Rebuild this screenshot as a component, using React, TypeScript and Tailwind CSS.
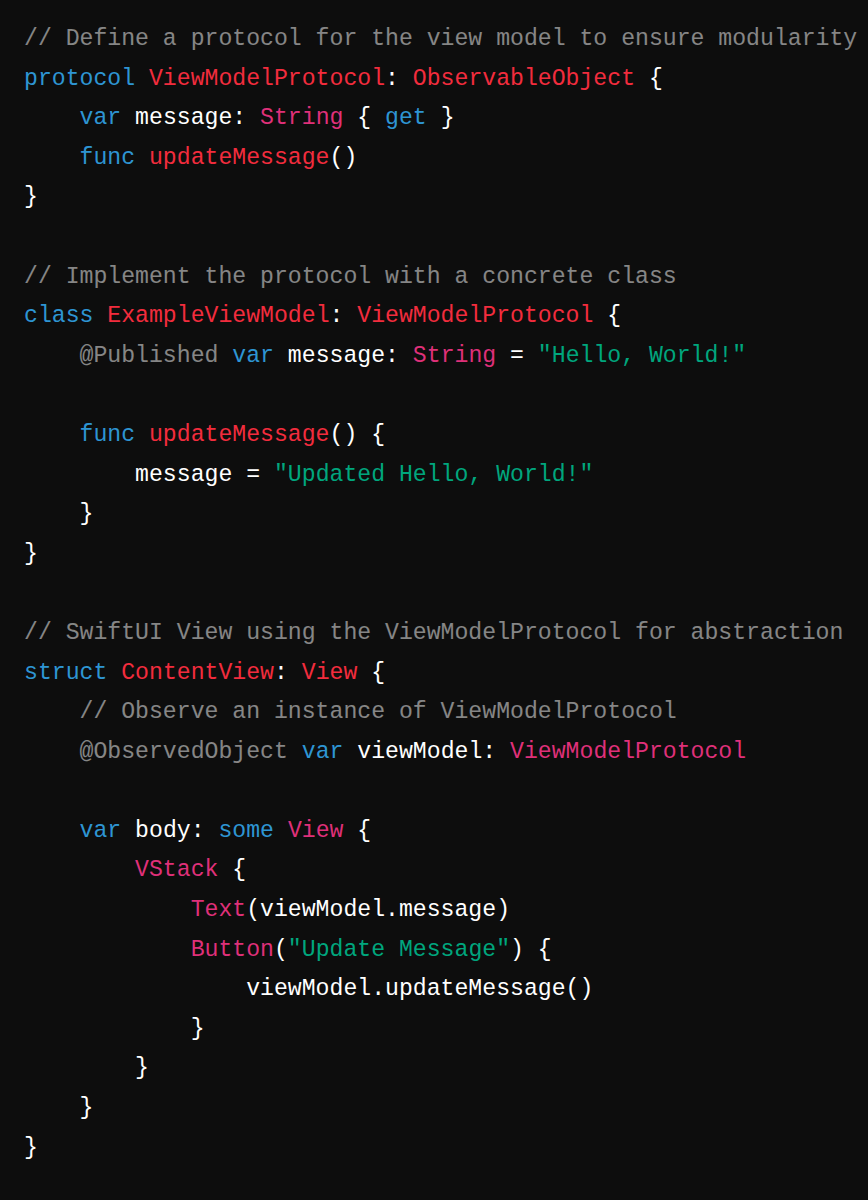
import React from "react";

type Tok = [string, string];

const K = "text-[#2e95d3]";
const T = "text-[#f22c3d]";
const P = "text-[#df3079]";
const S = "text-[#00a67d]";
const C = "text-[#ffffff80]";
const W = "text-white";

const lines: Tok[][] = [
  [[C, "// Define a protocol for the view model to ensure modularity"]],
  [[K, "protocol"], [W, " "], [T, "ViewModelProtocol"], [W, ": "], [T, "ObservableObject"], [W, " {"]],
  [[W, "    "], [K, "var"], [W, " message: "], [P, "String"], [W, " { "], [K, "get"], [W, " }"]],
  [[W, "    "], [K, "func"], [W, " "], [T, "updateMessage"], [W, "()"]],
  [[W, "}"]],
  [],
  [[C, "// Implement the protocol with a concrete class"]],
  [[K, "class"], [W, " "], [T, "ExampleViewModel"], [W, ": "], [T, "ViewModelProtocol"], [W, " {"]],
  [[W, "    "], [C, "@Published"], [W, " "], [K, "var"], [W, " message: "], [P, "String"], [W, " = "], [S, "\"Hello, World!\""]],
  [],
  [[W, "    "], [K, "func"], [W, " "], [T, "updateMessage"], [W, "() {"]],
  [[W, "        message = "], [S, "\"Updated Hello, World!\""]],
  [[W, "    }"]],
  [[W, "}"]],
  [],
  [[C, "// SwiftUI View using the ViewModelProtocol for abstraction"]],
  [[K, "struct"], [W, " "], [T, "ContentView"], [W, ": "], [T, "View"], [W, " {"]],
  [[W, "    "], [C, "// Observe an instance of ViewModelProtocol"]],
  [[W, "    "], [C, "@ObservedObject"], [W, " "], [K, "var"], [W, " viewModel: "], [P, "ViewModelProtocol"]],
  [],
  [[W, "    "], [K, "var"], [W, " body: "], [K, "some"], [W, " "], [P, "View"], [W, " {"]],
  [[W, "        "], [P, "VStack"], [W, " {"]],
  [[W, "            "], [P, "Text"], [W, "(viewModel.message)"]],
  [[W, "            "], [P, "Button"], [W, "("], [S, "\"Update Message\""], [W, ") {"]],
  [[W, "                viewModel.updateMessage()"]],
  [[W, "            }"]],
  [[W, "        }"]],
  [[W, "    }"]],
  [[W, "}"]],
];

export default function App() {
  return (
    <div className="min-h-[1200px] w-full bg-[#0d0d0d] overflow-hidden">
      <pre className="m-0 pl-[24px] pt-[20px] text-[23.15px] leading-[39.6px] whitespace-pre text-white [font-family:'Liberation_Mono','DejaVu_Sans_Mono',monospace]">
        {lines.map((l, i) => (
          <div key={i} className="h-[39.6px]">
            {l.map(([c, t], j) => (
              <span key={j} className={c}>
                {t}
              </span>
            ))}
          </div>
        ))}
      </pre>
    </div>
  );
}
